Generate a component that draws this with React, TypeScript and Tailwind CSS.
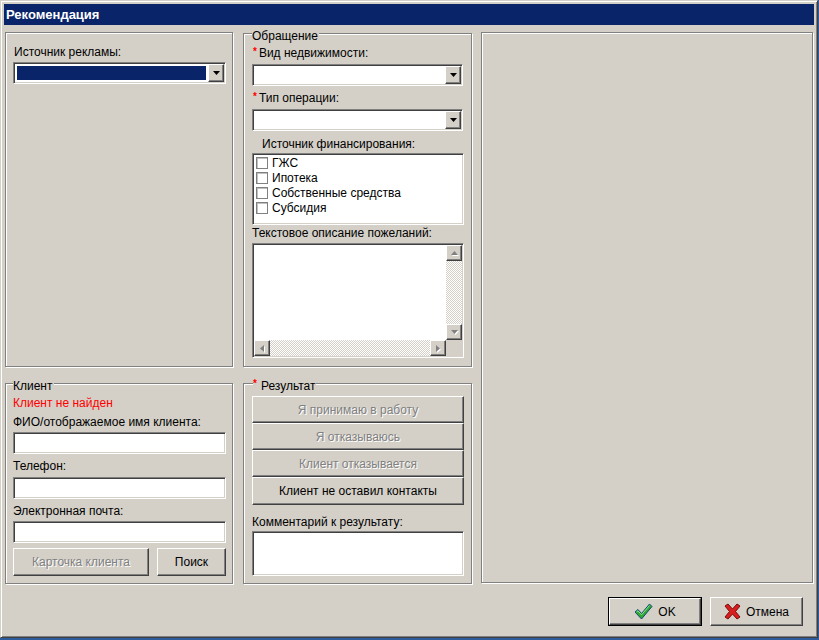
import React from "react";

const sunken =
  "border border-t-[#808080] border-l-[#808080] border-b-white border-r-white shadow-[inset_1px_1px_0_#404040,inset_-1px_-1px_0_#d4d0c8] p-[1px]";
const raised =
  "border border-t-white border-l-white border-b-[#404040] border-r-[#404040] shadow-[inset_-1px_-1px_0_#808080]";
const etched = "border border-[#808080] shadow-[inset_1px_1px_0_#fff,1px_1px_0_#fff]";
const disabledText = "text-[#808080] [text-shadow:1px_1px_0_#fff]";

const Label = ({ children, className = "" }: { children: React.ReactNode; className?: string }) => (
  <div className={`text-[12px] leading-[14px] whitespace-nowrap ${className}`}>{children}</div>
);

const Req = ({ gap = "mr-[2px]" }: { gap?: string }) => (
  <span className={`text-[#ff0000] text-[10px] font-bold relative -top-[2px] ${gap}`}>*</span>
);

const Arrow = ({ dir, color = "#000" }: { dir: "down" | "up" | "left" | "right"; color?: string }) => {
  const pts: Record<string, string> = {
    down: "0,0 7,0 3.5,4",
    up: "0,4 7,4 3.5,0",
    left: "4,0 4,7 0,3.5",
    right: "0,0 0,7 4,3.5",
  };
  const vertical = dir === "down" || dir === "up";
  return (
    <svg width={vertical ? 7 : 4} height={vertical ? 4 : 7} viewBox={vertical ? "0 0 7 4" : "0 0 4 7"}>
      <polygon points={pts[dir]} fill={color} />
    </svg>
  );
};

const Combo = ({ width, selected = false }: { width: string; selected?: boolean }) => (
  <div className={`${sunken} ${width} h-[22px] flex bg-white`}>
    <div className="flex-1 p-[2px]">
      {selected && <div className="w-full h-full bg-[#0a246a]" />}
    </div>
    <div className={`${raised} w-[16px] h-full bg-[#d4d0c8] flex items-center justify-center`}>
      <Arrow dir="down" />
    </div>
  </div>
);

const Input = ({ width }: { width: string }) => <div className={`${sunken} ${width} h-[22px] bg-white`} />;

const ScrollBtn = ({ dir }: { dir: "down" | "up" | "left" | "right" }) => (
  <div className={`${raised} w-[16px] h-[16px] bg-[#d4d0c8] flex items-center justify-center shrink-0`}>
    <div className="relative">
      <div className="absolute left-[1px] top-[1px]">
        <Arrow dir={dir} color="#fff" />
      </div>
      <div className="relative">
        <Arrow dir={dir} color="#808080" />
      </div>
    </div>
  </div>
);

const track = "bg-[repeating-conic-gradient(#d4d0c8_0_25%,#ffffff_0_50%)] bg-[length:2px_2px]";

const Group = ({
  legend,
  required = false,
  className,
  legendLeft = "left-[7px]",
  children,
}: {
  legend: string;
  required?: boolean;
  className: string;
  legendLeft?: string;
  children: React.ReactNode;
}) => (
  <div className={`relative ${etched} ${className}`}>
    <div className={`absolute -top-[5px] ${legendLeft} bg-[#d4d0c8] text-[12px] leading-[14px] pr-[1px] flex items-center`}>
      {required && <Req gap="mr-[4px]" />}
      {legend}
    </div>
    {children}
  </div>
);

const CheckIcon = () => (
  <svg width="19" height="17" viewBox="0 0 19 17">
    <polygon points="1,9 4,6.5 7.5,10.5 15.5,1 18,3.5 7.5,16" fill="#2fa82f" stroke="#134a7a" strokeWidth="1" strokeLinejoin="round" />
    <polyline points="2.5,9 4,7.8 7.5,11.8 15.5,2.5" fill="none" stroke="#8fe08f" strokeWidth="1" />
  </svg>
);

const CrossIcon = () => (
  <svg width="17" height="17" viewBox="0 0 17 17">
    <polygon
      points="1,3 4,1 8.5,6 13,1 16,3 11.5,8.5 16,14 13,16 8.5,11 4,16 1,14 5.5,8.5"
      fill="#d81e1e"
      stroke="#7a0c0c"
      strokeWidth="1"
      strokeLinejoin="round"
    />
  </svg>
);

export default function App() {
  return (
    <div className="w-[819px] h-[640px] bg-[#2c5c9c] font-['Liberation_Sans',Arial,sans-serif] text-black overflow-hidden">
      <div className="w-[818px] h-[638px] bg-[#d4d0c8] border border-t-[#d4d0c8] border-l-[#d4d0c8] border-b-[#404040] border-r-[#404040] shadow-[inset_1px_1px_0_#fff,inset_-1px_-1px_0_#808080] p-[3px]">
        {/* Title bar */}
        <div className="h-[21px] bg-[#0a246a] flex items-center pl-[2px]">
          <span className="text-white font-bold text-[13px] leading-[15px]">Рекомендация</span>
        </div>

        {/* Body */}
        <div className="mt-[7px] ml-[1px] flex h-[552px]">
          {/* Left column */}
          <div className="w-[228px] flex flex-col">
            <div className={`${etched} h-[335px] pl-[7px]`}>
              <Label className="mt-[12px] ml-[1px]">Источник рекламы:</Label>
              <div className="mt-[3px]">
                <Combo width="w-[213px]" selected />
              </div>
            </div>
            <Group legend="Клиент" className="mt-[16px] h-[201px] pl-[7px]">
              <Label className="mt-[12px] text-[#ff0000]">Клиент не найден</Label>
              <Label className="mt-[5px]">ФИО/отображаемое имя клиента:</Label>
              <div className="mt-[3px]">
                <Input width="w-[213px]" />
              </div>
              <Label className="mt-[5px]">Телефон:</Label>
              <div className="mt-[4px]">
                <Input width="w-[213px]" />
              </div>
              <Label className="mt-[5px]">Электронная почта:</Label>
              <div className="mt-[3px]">
                <Input width="w-[213px]" />
              </div>
              <div className="mt-[5px] flex gap-[8px]">
                <div className={`${raised} w-[136px] h-[28px] flex items-center justify-center text-[12px] ${disabledText}`}>
                  Карточка клиента
                </div>
                <div className={`${raised} w-[69px] h-[28px] flex items-center justify-center text-[12px]`}>Поиск</div>
              </div>
            </Group>
          </div>

          {/* Middle column */}
          <div className="w-[229px] ml-[10px] flex flex-col">
            <Group legend="Обращение" legendLeft="left-[8px]" className="mt-[1px] h-[334px] pl-[8px]">
              <Label className="mt-[12px] ml-[1px]">
                <Req />
                Вид недвижимости:
              </Label>
              <div className="mt-[3px]">
                <Combo width="w-[211px]" />
              </div>
              <Label className="mt-[5px] ml-[1px]">
                <Req />
                Тип операции:
              </Label>
              <div className="mt-[3px]">
                <Combo width="w-[211px]" />
              </div>
              <Label className="mt-[6px] ml-[10px]">Источник финансирования:</Label>
              <div className={`${sunken} mt-[2px] w-[212px] h-[72px] bg-white pl-[3px] pt-[1px]`}>
                {["ГЖС", "Ипотека", "Собственные средства", "Субсидия"].map((t) => (
                  <div key={t} className="h-[15px] flex items-center">
                    <div className="w-[12px] h-[12px] border border-[#808080] bg-white shadow-[inset_1px_1px_0_#c0c0c0] mr-[4px]" />
                    <span className="text-[12px] leading-[14px]">{t}</span>
                  </div>
                ))}
              </div>
              <Label className="mt-[1px]">Текстовое описание пожеланий:</Label>
              <div className={`${sunken} mt-[3px] w-[212px] h-[115px] bg-white flex flex-col`}>
                <div className="flex flex-1">
                  <div className="flex-1" />
                  <div className="w-[16px] flex flex-col">
                    <ScrollBtn dir="up" />
                    <div className={`flex-1 ${track}`} />
                    <ScrollBtn dir="down" />
                  </div>
                </div>
                <div className="flex h-[16px]">
                  <ScrollBtn dir="left" />
                  <div className={`flex-1 ${track}`} />
                  <ScrollBtn dir="right" />
                  <div className="w-[16px] bg-[#d4d0c8]" />
                </div>
              </div>
            </Group>
            <Group legend="Результат" required legendLeft="left-[9px]" className="mt-[16px] h-[201px] pl-[8px]">
              <div className="mt-[12px] flex flex-col w-[212px]">
                {["Я принимаю в работу", "Я отказываюсь", "Клиент отказывается"].map((t) => (
                  <div key={t} className={`${raised} h-[27px] flex items-center justify-center text-[12px] ${disabledText}`}>
                    {t}
                  </div>
                ))}
                <div className={`${raised} h-[28px] flex items-center justify-center text-[12px]`}>
                  Клиент не оставил контакты
                </div>
              </div>
              <Label className="mt-[10px]">Комментарий к результату:</Label>
              <div className="mt-[2px]">
                <Input width="w-[212px] h-[45px]" />
              </div>
            </Group>
          </div>

          {/* Right column */}
          <div className={`${etched} w-[332px] ml-[9px] h-[551px]`} />
        </div>

        {/* Buttons */}
        <div className="mt-[13px] ml-[1px] w-[808px] flex justify-end gap-[8px] pr-[10px]">
          <div className="border border-black w-[94px] h-[29px]">
            <div className={`${raised} w-full h-full flex items-center justify-center gap-[5px] text-[12px]`}>
              <CheckIcon />
              <span>OK</span>
            </div>
          </div>
          <div className={`${raised} w-[93px] h-[29px] flex items-center justify-center gap-[5px] text-[12px]`}>
            <CrossIcon />
            <span>Отмена</span>
          </div>
        </div>
      </div>
    </div>
  );
}
